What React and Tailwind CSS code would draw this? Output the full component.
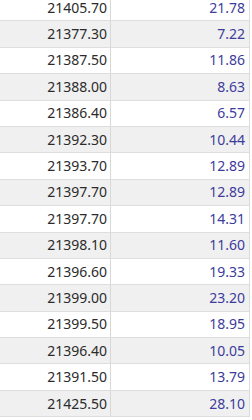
const rows = [
  ["21405.70", "21.78"],
  ["21377.30", "7.22"],
  ["21387.50", "11.86"],
  ["21388.00", "8.63"],
  ["21386.40", "6.57"],
  ["21392.30", "10.44"],
  ["21393.70", "12.89"],
  ["21397.70", "12.89"],
  ["21397.70", "14.31"],
  ["21398.10", "11.60"],
  ["21396.60", "19.33"],
  ["21399.00", "23.20"],
  ["21399.50", "18.95"],
  ["21396.40", "10.05"],
  ["21391.50", "13.79"],
  ["21425.50", "28.10"],
];

export default function App() {
  return (
    <div className="w-[252px] h-[420px] overflow-hidden bg-white" style={{ fontFamily: '"Noto Sans", "Open Sans", sans-serif' }}>
      <div className="-mt-[5px] w-[250px] border-r border-[#dcdcdc]">
        {rows.map((r, i) => (
          <div
            key={i}
            className={`flex h-[26.4px] border-b border-[#dedede] text-[14px] leading-none ${i % 2 === 1 ? "bg-[#f0f0f0]" : "bg-white"}`}
          >
            <div className="w-[111px] shrink-0 border-r border-[#d8d8d8] flex items-center justify-end pr-[3px] text-[#2b2b2b]">
              {r[0]}
            </div>
            <div className="flex-1 flex items-center justify-end pr-[4px] text-[#3c3c9c]">
              {r[1]}
            </div>
          </div>
        ))}
      </div>
    </div>
  );
}
